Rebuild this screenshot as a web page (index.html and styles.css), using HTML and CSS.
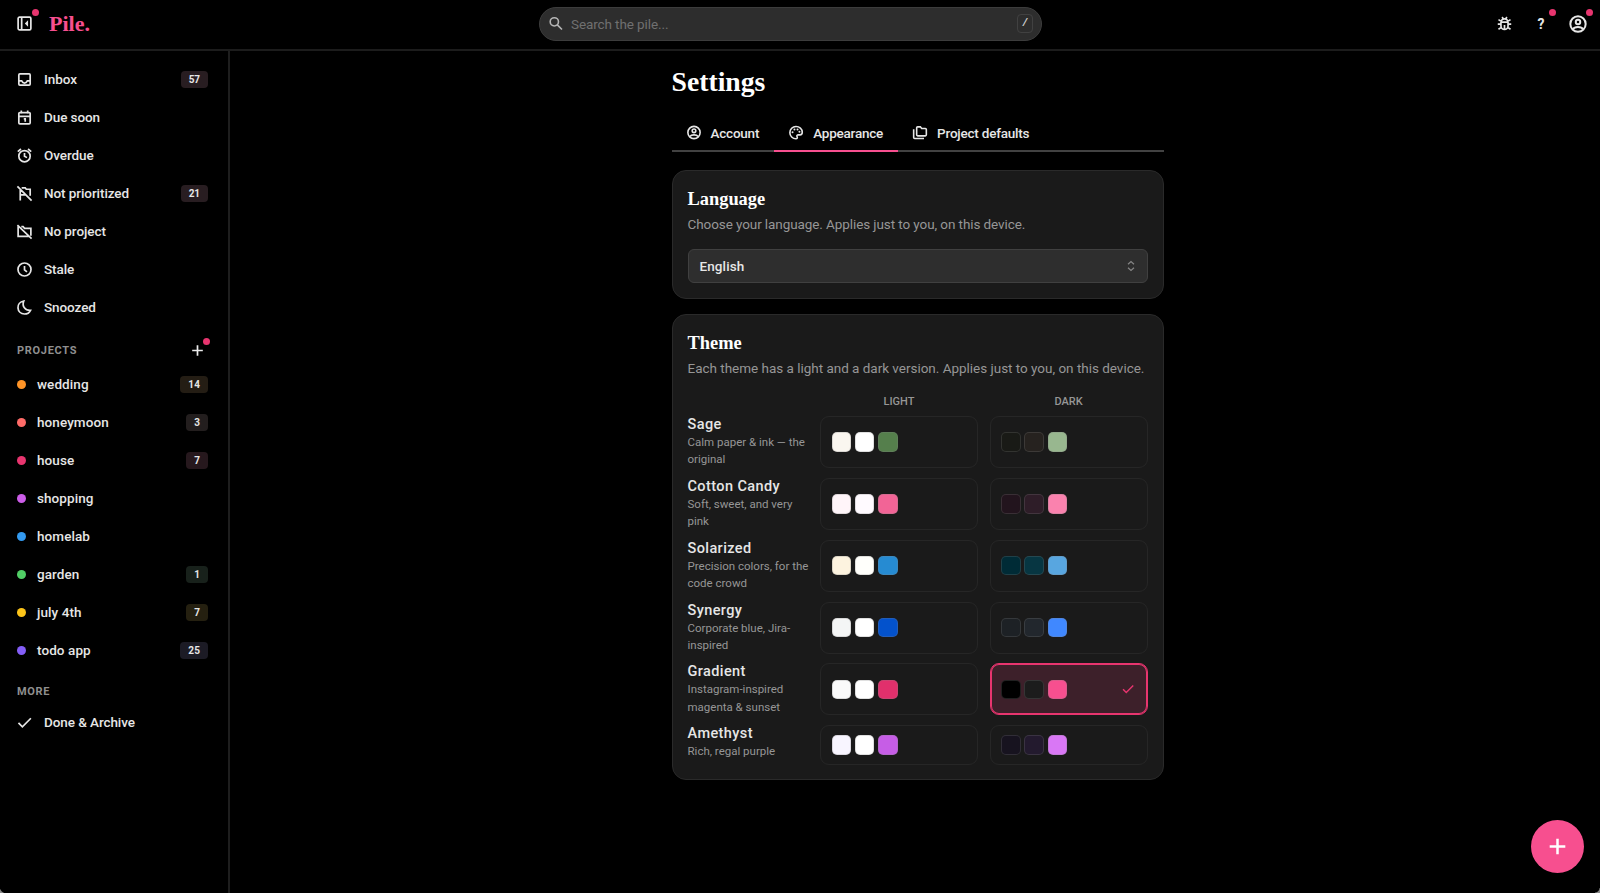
FILE: index.html
```
<!DOCTYPE html>
<html lang="en">
<head>
  <meta charset="utf-8">
  <meta name="viewport" content="width=device-width, initial-scale=1.0">
  <title>Pile - Settings</title>
  <link rel="stylesheet" href="styles.css">
</head>
<body>
  <svg class="sprite" xmlns="http://www.w3.org/2000/svg">
    <symbol id="i-panel" viewBox="0 0 24 24"><rect x="3" y="3" width="18" height="18" rx="2"/><path d="M8 3v18"/><path class="solid" d="M17 7.5v9L12.5 12z"/></symbol>
    <symbol id="i-inbox" viewBox="0 0 24 24"><rect x="4" y="4" width="16" height="16" rx="1.5"/><path d="M4 14h4c1 2 2.300 3 4 3s3-1 4-3h4"/></symbol>
    <symbol id="i-calendar" viewBox="0 0 24 24"><rect x="4" y="5" width="16" height="16" rx="1.500"/><path d="M4 10.500h16M7.500 2v4M16.500 2v4M11 14h2v4"/></symbol>
    <symbol id="i-alarm" viewBox="0 0 24 24"><circle cx="12" cy="13" r="8"/><path d="M12 8.500V13l3.500 2M2.500 6.500 7 2.800M21.500 6.500 17 2.800"/></symbol>
    <symbol id="i-flag-off" viewBox="0 0 24 24"><path d="M2 2l20 20M6 6v16M6 14h8M9 4h4l1.500 2H20v9M8 4h1"/></symbol>
    <symbol id="i-folder-off" viewBox="0 0 24 24"><path d="M2 3l20 19M7.500 5H10l2 2.500h9V18M3 5v14h15.500"/></symbol>
    <symbol id="i-clock" viewBox="0 0 24 24"><circle cx="12" cy="12" r="9.200"/><path d="M12 7v5.500l3.500 3"/></symbol>
    <symbol id="i-moon" viewBox="0 0 24 24"><path d="M11 2.800C5.500 3.800 2.500 8 2.800 12.500c.3 5 4 8.700 9 8.700 4 0 7.200-2 8.700-5.200-7.500.5-12.500-5.500-9.500-13.200z"/></symbol>
    <symbol id="i-plus" viewBox="0 0 24 24"><path d="M12 4.500v15M4.500 12h15"/></symbol>
    <symbol id="i-check" viewBox="0 0 24 24"><path d="M3.500 12.500 9 18 21 6"/></symbol>
    <symbol id="i-search" viewBox="0 0 24 24"><circle cx="9.500" cy="9.500" r="6.200"/><path d="M14 14l7 7"/></symbol>
    <symbol id="i-bug" viewBox="0 0 24 24"><path d="M7 10.500a5 5 0 0 1 10 0v5a5 5 0 0 1-10 0zM7.500 10h9M8.500 3l2.500 3M15.500 3 13 6M2.500 13H7M17 13h4.500M3.500 6.500 7.500 9M20.500 6.500l-4 2.500M3.500 20l4-2.500M20.500 20l-4-2.500M12 14v6"/></symbol>
    <symbol id="i-user" viewBox="0 0 24 24"><circle cx="12" cy="12" r="9.200"/><circle cx="12" cy="9.500" r="2.700"/><path d="M6 18c1-1.800 3.300-2.500 6-2.500s5 .7 6 2.500"/></symbol>
    <symbol id="i-palette" viewBox="0 0 24 24"><path d="M12 3a9.200 9.200 0 0 0 0 18.400c1.800 0 2.500-1.400 1.700-2.800-1-1.700 0-3.100 1.800-3.100H18c2 0 3.400-1.500 3.400-3.800C21.400 6.500 17 3 12 3z"/><g class="solid"><circle cx="6.800" cy="11.500" r="1.500"/><circle cx="9.700" cy="7.600" r="1.500"/><circle cx="14.300" cy="7.600" r="1.500"/><circle cx="17.200" cy="11" r="1.500"/></g></symbol>
    <symbol id="i-folders" viewBox="0 0 24 24"><path d="M8.500 3.500h4l2 2.500H20q1.500 0 1.500 1.500v8q0 1.500-1.500 1.500H8.500Q7 17 7 15.500V5q0-1.500 1.500-1.500zM2.500 7v12.500q0 1.500 1.500 1.500h14"/></symbol>
    <symbol id="i-updown" viewBox="0 0 24 24"><path d="M6 8.500 12 3l6 5.500M6 15.500 12 21l6-5.500"/></symbol>
  </svg>

  <header class="topbar">
    <button class="icon-btn toggle"><svg class="icon"><use href="#i-panel"/></svg><span class="dot"></span></button>
    <a class="logo">Pile.</a>
    <div class="search">
      <svg class="icon"><use href="#i-search"/></svg>
      <span class="placeholder">Search the pile...</span>
      <kbd>/</kbd>
    </div>
    <nav class="actions">
      <button class="icon-btn"><svg class="icon"><use href="#i-bug"/></svg></button>
      <button class="icon-btn help">?<span class="dot"></span></button>
      <button class="icon-btn user"><svg class="icon"><use href="#i-user"/></svg><span class="dot"></span></button>
    </nav>
  </header>

  <div class="layout">
    <aside class="sidebar">
      <a class="item"><svg class="icon"><use href="#i-inbox"/></svg>Inbox<span class="badge">57</span></a>
      <a class="item"><svg class="icon"><use href="#i-calendar"/></svg>Due soon</a>
      <a class="item"><svg class="icon"><use href="#i-alarm"/></svg>Overdue</a>
      <a class="item"><svg class="icon"><use href="#i-flag-off"/></svg>Not prioritized<span class="badge">21</span></a>
      <a class="item"><svg class="icon"><use href="#i-folder-off"/></svg>No project</a>
      <a class="item"><svg class="icon"><use href="#i-clock"/></svg>Stale</a>
      <a class="item"><svg class="icon"><use href="#i-moon"/></svg>Snoozed</a>
      <div class="section">PROJECTS
        <button class="icon-btn add"><svg class="icon"><use href="#i-plus"/></svg><span class="dot"></span></button>
      </div>
      <div id="projects"></div>
      <div class="section more">MORE</div>
      <a class="item"><svg class="icon"><use href="#i-check"/></svg>Done &amp; Archive</a>
    </aside>

    <main class="content">
      <div class="settings">
        <h1>Settings</h1>
        <div class="tabs">
          <a class="tab"><svg class="icon"><use href="#i-user"/></svg><span>Account</span></a>
          <a class="tab active"><svg class="icon"><use href="#i-palette"/></svg><span>Appearance</span></a>
          <a class="tab"><svg class="icon"><use href="#i-folders"/></svg><span>Project defaults</span></a>
        </div>

        <section class="card">
          <h2>Language</h2>
          <p class="hint">Choose your language. Applies just to you, on this device.</p>
          <div class="select">English<svg class="icon"><use href="#i-updown"/></svg></div>
        </section>

        <section class="card">
          <h2>Theme</h2>
          <p class="hint wide">Each theme has a light and a dark version. Applies just to you, on this device.</p>
          <div class="themes" id="themes">
            <span></span><span class="col">LIGHT</span><span class="col">DARK</span>
          </div>
        </section>
      </div>
    </main>
  </div>

  <button class="fab"><svg class="icon"><use href="#i-plus"/></svg></button>
  <div class="corner left"></div>
  <div class="corner right"></div>

  <script>
    const projects = [
      { name: 'wedding', color: '#ff9427', count: 14, tint: '#241d14' },
      { name: 'honeymoon', color: '#ff6b68', count: 3, tint: '#231e1e' },
      { name: 'house', color: '#e8356f', count: 7, tint: '#26181d' },
      { name: 'shopping', color: '#cc5de8' },
      { name: 'homelab', color: '#339af0' },
      { name: 'garden', color: '#51cf66', count: 1, tint: '#18211b' },
      { name: 'july 4th', color: '#fcc419', count: 7, tint: '#252010' },
      { name: 'todo app', color: '#845ef7', count: 25, tint: '#1c1b25' }
    ];

    const themes = [
      { name: 'Sage', desc: 'Calm paper & ink — the original', light: ['#faf6ef', '#ffffff', '#557f4c'], dark: ['#191a16', '#26221f', '#98b78f'] },
      { name: 'Cotton Candy', desc: 'Soft, sweet, and very pink', light: ['#fff5f9', '#fffaff', '#f26496'], dark: ['#22141d', '#2e1d28', '#fa82ae'] },
      { name: 'Solarized', desc: 'Precision colors, for the code crowd', light: ['#fdf3df', '#fffffb', '#268bd2'], dark: ['#002b36', '#073642', '#58a6e0'] },
      { name: 'Synergy', desc: 'Corporate blue, Jira-inspired', light: ['#f4f5f5', '#ffffff', '#0352cc'], dark: ['#1d2125', '#22272d', '#4088ff'] },
      { name: 'Gradient', desc: 'Instagram-inspired magenta & sunset', light: ['#fafafa', '#ffffff', '#e1306c'], dark: ['#000000', '#1c1c1c', '#f74f8f'], selected: 'dark' },
      { name: 'Amethyst', desc: 'Rich, regal purple', light: ['#f8f5ff', '#ffffff', '#c65de6'], dark: ['#17131f', '#231a2e', '#d977f5'] }
    ];

    document.getElementById('projects').innerHTML = projects.map(p => `
      <a class="item project">
        <span class="bullet" style="background: ${p.color}"></span>${p.name}
        ${p.count ? `<span class="badge" style="background: ${p.tint}">${p.count}</span>` : ''}
      </a>`).join('');

    function cell(theme, mode) {
      const on = theme.selected === mode;
      const swatches = theme[mode].map(c => `<i class="swatch" style="background-color: ${c}"></i>`).join('');
      return `<div class="choice ${on ? 'selected' : ''}">${swatches}${on ? '<svg class="icon"><use href="#i-check"/></svg>' : ''}</div>`;
    }

    document.getElementById('themes').innerHTML += themes.map(t => `
      <div class="label"><b>${t.name}</b><small>${t.desc.replace('&', '&amp;')}</small></div>
      ${cell(t, 'light')}${cell(t, 'dark')}`).join('');
  </script>
</body>
</html>
```
FILE: styles.css
```
* {
  box-sizing: border-box;
}
html, body {
  margin: 0;
  height: 100%;
  overflow: hidden;
  background: #000;
  color: #e6e6e6;
  font-family: Roboto, "Liberation Sans", sans-serif;
  font-size: 13.5px;
  font-weight: 500;
}
body {
  display: flex;
  flex-direction: column;
}
h1, h2, .logo {
  font-family: "Liberation Serif", serif;
  font-weight: 700;
}
.sprite {
  display: none;
}
.icon {
  width: 17px;
  height: 17px;
  flex: none;
  fill: none;
  stroke: currentColor;
  stroke-width: 2.4;
}
.solid {
  fill: currentColor;
  stroke: none;
}
button {
  border: 0;
  padding: 0;
  background: none;
  color: inherit;
  font: inherit;
}
.icon-btn {
  position: relative;
  display: flex;
  align-items: center;
  justify-content: center;
  width: 24px;
  height: 24px;
}
.dot {
  position: absolute;
  top: -3px;
  right: -3px;
  width: 7px;
  height: 7px;
  border-radius: 50%;
  background: #e8356f;
}

/* top bar */
.topbar {
  display: grid;
  grid-template-columns: 37px 502px 503px 1fr;
  align-items: center;
  height: 51px;
  padding-bottom: 2px;
  border-bottom: 2px solid #1c1c1c;
  flex: none;
}
.toggle {
  margin-left: 12px;
}
.logo {
  padding-left: 12px;
  font-size: 22px;
  color: #f74f8f;
}
.search {
  display: flex;
  align-items: center;
  height: 34px;
  padding: 0 8px;
  border: 1px solid #3c3c3c;
  border-radius: 18px;
  background: #2d2d2d;
}
.search .icon {
  width: 16px;
  color: #b5b5b5;
  margin-right: 7px;
}
.placeholder {
  flex: 1;
  color: #707070;
  font-weight: 400;
  letter-spacing: -0.1px;
}
kbd {
  width: 16px;
  height: 19px;
  border: 1px solid #414141;
  border-radius: 4px;
  text-align: center;
  font: 700 11px/17px "Liberation Mono", monospace;
  color: #ccc;
}
.actions {
  display: flex;
  justify-content: flex-end;
  gap: 13px;
  padding-right: 10px;
}
.help {
  font-size: 14px;
  font-weight: 700;
}
.help .dot {
  right: -3px;
}
.user .icon {
  width: 20px;
  height: 20px;
}

/* sidebar */
.layout {
  display: flex;
  flex: 1;
  min-height: 0;
}
.sidebar {
  width: 230px;
  padding: 9px 20px 0 16px;
  border-right: 2px solid #1e1e1e;
}
.item {
  display: flex;
  align-items: center;
  gap: 11px;
  height: 38px;
  letter-spacing: -0.08px;
}
.project {
  letter-spacing: 0.08px;
}
.badge {
  margin-left: auto;
  padding: 0 8px;
  border-radius: 4px;
  background: #281d21;
  font-size: 10px;
  font-weight: 700;
  line-height: 17px;
}
.section {
  display: flex;
  align-items: center;
  justify-content: space-between;
  height: 39px;
  padding: 10px 0 0 1px;
  color: #8f8f8f;
  font-size: 11px;
  font-weight: 700;
  letter-spacing: 0.7px;
}
.section.more {
  height: 34px;
}
.add {
  margin-right: -1px;
  color: #ececec;
}
.add .dot {
  top: -1px;
  right: -1px;
}
.bullet {
  width: 9px;
  height: 9px;
  margin-left: 1px;
  border-radius: 50%;
}

/* settings */
.content {
  flex: 1;
}
.settings {
  width: 492px;
  margin-left: 441.5px;
}
h1 {
  margin: 0;
  padding-top: 14px;
  font-size: 27.7px;
  line-height: 34px;
  color: #fff;
}
.tabs {
  display: flex;
  margin-top: 16px;
  height: 37px;
  border-bottom: 2px solid #424242;
}
.tab {
  display: flex;
  align-items: center;
  gap: 9px;
  height: 37px;
  padding: 0 15px 2px 14px;
  letter-spacing: -0.22px;
}
.tab .icon {
  width: 16px;
}
.tab.active {
  border-bottom: 2px solid #f74f8f;
  padding-bottom: 0;
}
.card {
  margin-top: 18px;
  padding: 16px 15px 14px;
  border: 1px solid #2a2a2a;
  border-radius: 14px;
  background: #1a1a1a;
}
.card + .card {
  margin-top: 15px;
}
h2 {
  margin: 0;
  font-size: 18.4px;
  line-height: 25px;
  color: #fff;
}
.hint {
  margin: 1px 0 14px;
  color: #969696;
  font-weight: 400;
  line-height: 22px;
  letter-spacing: -0.09px;
  white-space: nowrap;
}
.select {
  display: flex;
  align-items: center;
  justify-content: space-between;
  height: 34px;
  margin-bottom: 1px;
  padding: 0 8px 0 11px;
  border: 1px solid #404040;
  border-radius: 6px;
  background: #2e2e2e;
  letter-spacing: 0.1px;
}
.select .icon {
  width: 14px;
  height: 12px;
  margin-right: 1px;
  color: #868686;
}
.themes {
  display: grid;
  grid-template-columns: 121px 158px 158px;
  column-gap: 11.5px;
  row-gap: 9.9px;
}
.hint.wide {
  margin-bottom: 17px;
  letter-spacing: -0.02px;
}
.col {
  height: 10px;
  line-height: 11px;
  text-align: center;
  font-size: 11px;
  color: #969696;
}
.label b {
  display: block;
  font-size: 14.5px;
  font-weight: 500;
  line-height: 18px;
  letter-spacing: 0.4px;
}
.label small {
  display: block;
  margin-bottom: -0.6px;
  font-size: 11.5px;
  font-weight: 400;
  line-height: 17.3px;
  color: #969696;
}
.choice {
  display: flex;
  align-items: center;
  gap: 3.9px;
  min-height: 38.5px;
  padding: 9px 10.5px;
  border: 1px solid #262626;
  border-radius: 9px;
}
.swatch {
  width: 19.5px;
  height: 19.5px;
  border: 1px solid rgba(128, 128, 128, 0.25);
  border-radius: 5px;
}
.choice.selected {
  border-color: #e8356f;
  box-shadow: inset 0 0 0 1px #e8356f;
  background: #3d202a;
}
.choice .icon {
  width: 14px;
  height: 14px;
  margin-left: auto;
  margin-right: 1px;
  color: #e8356f;
}

.fab {
  position: fixed;
  right: 16px;
  bottom: 20px;
  display: flex;
  align-items: center;
  justify-content: center;
  width: 53px;
  height: 53px;
  border-radius: 50%;
  background: #f74f8f;
  color: #fff;
}
.fab .icon {
  width: 25px;
  height: 25px;
}
.corner {
  position: fixed;
  bottom: 0;
  width: 7px;
  height: 7px;
}
.left {
  left: 0;
  background: radial-gradient(circle at 100% 0, transparent 7px, #8a8a8a 8px);
}
.right {
  right: 0;
  width: 5px;
  height: 5px;
  background: radial-gradient(circle at 0 0, transparent 4px, #8a8a8a 5px);
}
```
